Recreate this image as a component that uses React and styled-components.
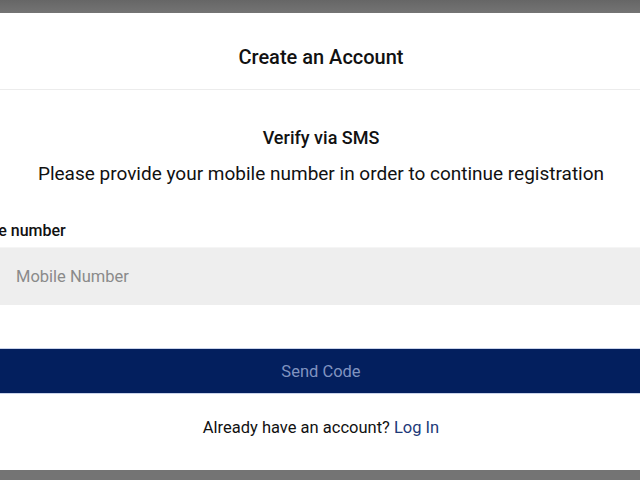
import React from "react"
import styled, { createGlobalStyle } from "styled-components"

const GlobalStyle = createGlobalStyle`
  html, body {
    margin: 0;
    padding: 0;
    background: #6f6f6f;
    overflow: hidden;
  }
  * {
    box-sizing: border-box;
  }
`

const Backdrop = styled.div`
  height: 480px;
  padding-top: 13px;
  background: linear-gradient(#666 0, #747474 13px, #747474 100%);
  font-family: Roboto, "Liberation Sans", sans-serif;
  color: #111;
`

const Modal = styled.div`
  background: #fff;
  width: 726px;
  height: 457px;
  margin-left: -42px;
  display: flex;
  flex-direction: column;
`

const Header = styled.div`
  height: 77px;
  display: flex;
  align-items: center;
  justify-content: center;
  border-bottom: 1px solid #ececec;
`

const Title = styled.h2`
  margin: 0;
  font-size: 20px;
  font-weight: 500;
  padding-top: 12px;
`

const Body = styled.div`
  display: flex;
  flex-direction: column;
  padding-top: 36px;
`

const Heading = styled.h3`
  margin: 0;
  text-align: center;
  font-size: 18px;
  font-weight: 500;
  line-height: 24px;
`

const Lead = styled.p`
  margin: 12px 0 0;
  text-align: center;
  font-size: 19px;
  line-height: 24px;
`

const Field = styled.div`
  margin-top: 35px;
  display: flex;
  flex-direction: column;
`

const Label = styled.label`
  font-size: 16px;
  font-weight: 500;
  line-height: 20px;
`

const Input = styled.input`
  margin-top: 6px;
  height: 58px;
  border: none;
  border-top: 1px solid #f5f5f5;
  background: #eeeeee;
  padding: 0 0 0 58px;
  font: inherit;
  font-size: 16.5px;
  color: #333;
  outline: none;

  &::placeholder {
    color: #8a8a8a;
  }
`

const SendButton = styled.button`
  margin-top: 43px;
  height: 46px;
  border: none;
  border-top: 1px solid #c9d3ea;
  border-bottom: 1px solid #c9d3ea;
  background: #031f5e;
  color: #8093c0;
  font: inherit;
  font-size: 16.5px;
`

const Footer = styled.p`
  margin: 24px 0 0;
  text-align: center;
  font-size: 16.5px;
  line-height: 20px;
`

const LoginLink = styled.a`
  color: #1d3a78;
  text-decoration: none;
`

export default function App() {
  return (
    <>
      <GlobalStyle />
      <Backdrop>
        <Modal>
          <Header>
            <Title>Create an Account</Title>
          </Header>
          <Body>
            <Heading>Verify via SMS</Heading>
            <Lead>Please provide your mobile number in order to continue registration</Lead>
            <Field>
              <Label htmlFor="mobile">Mobile number</Label>
              <Input id="mobile" placeholder="Mobile Number" />
            </Field>
            <SendButton>Send Code</SendButton>
            <Footer>
              Already have an account? <LoginLink href="#">Log In</LoginLink>
            </Footer>
          </Body>
        </Modal>
      </Backdrop>
    </>
  )
}
